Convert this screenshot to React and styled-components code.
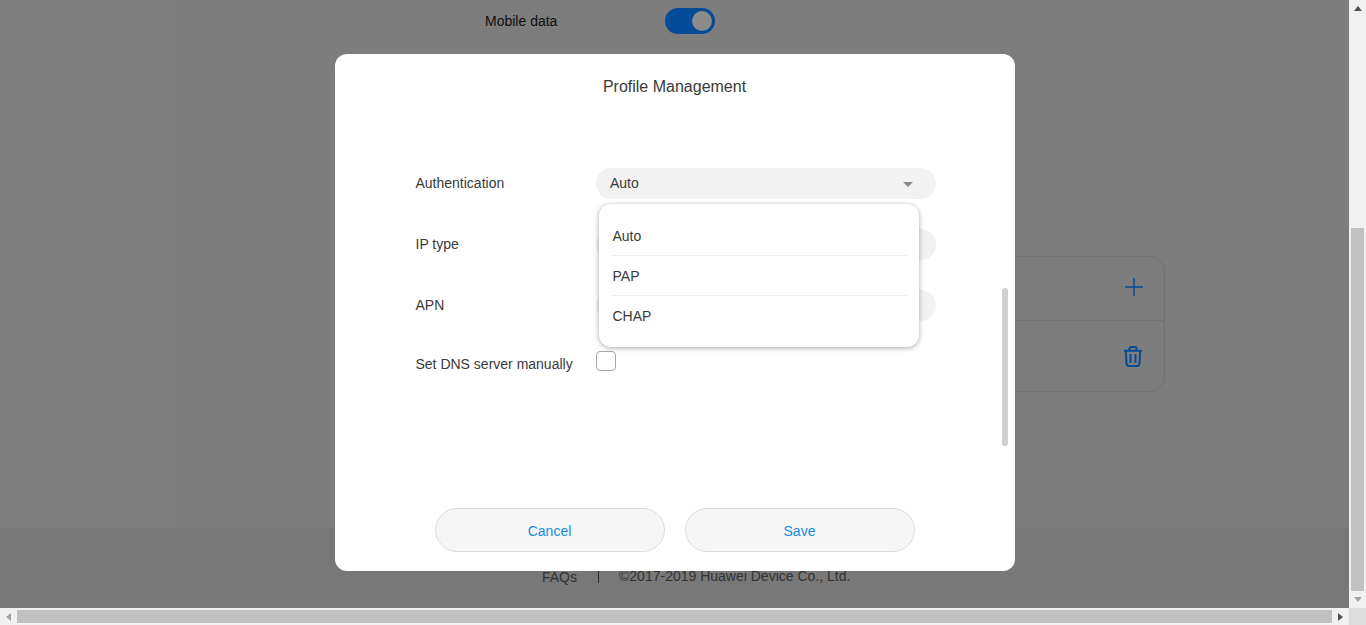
import React from 'react';
import styled, { createGlobalStyle } from 'styled-components';

const options = ['Auto', 'PAP', 'CHAP'];

const App = () => {
  return (
    <Screen>
      <GlobalStyle />
      <PageArea>
        <Main>
          <DataRow>
            <DataLabel>Mobile data</DataLabel>
            <Toggle>
              <Knob />
            </Toggle>
          </DataRow>
          <Card>
            <AddRow>
              <PlusIcon />
            </AddRow>
            <DeleteRow>
              <TrashIcon />
            </DeleteRow>
          </Card>
        </Main>
        <Footer>
          <FaqLink>FAQs</FaqLink>
          <FooterBar />
          <Copyright>©2017-2019 Huawei Device Co., Ltd.</Copyright>
        </Footer>
        <Backdrop>
          <Modal>
            <ModalTitle>Profile Management</ModalTitle>
            <Form>
              <FormRow>
                <FieldLabel>Authentication</FieldLabel>
                <Select>
                  Auto
                  <Caret />
                  <Dropdown>
                    {options.map((option, i) => (
                      <Option key={option} $last={i === options.length - 1}>
                        {option}
                      </Option>
                    ))}
                  </Dropdown>
                </Select>
              </FormRow>
              <FormRow>
                <FieldLabel>IP type</FieldLabel>
                <Select />
              </FormRow>
              <FormRow>
                <FieldLabel>APN</FieldLabel>
                <Select />
              </FormRow>
              <CheckRow>
                <FieldLabel>Set DNS server manually</FieldLabel>
                <Checkbox />
              </CheckRow>
            </Form>
            <ModalScroll />
            <ButtonRow>
              <ActionButton>Cancel</ActionButton>
              <ActionButton>Save</ActionButton>
            </ButtonRow>
          </Modal>
        </Backdrop>
      </PageArea>
      <VerticalBar>
        <ArrowBox>
          <Arrow $dir="up" />
        </ArrowBox>
        <VerticalTrack>
          <VerticalThumb />
        </VerticalTrack>
        <ArrowBox>
          <Arrow $dir="down" />
        </ArrowBox>
      </VerticalBar>
      <HorizontalBar>
        <ArrowBox>
          <Arrow $dir="left" />
        </ArrowBox>
        <HorizontalThumb />
        <ArrowBox>
          <Arrow $dir="right" />
        </ArrowBox>
      </HorizontalBar>
      <Corner />
    </Screen>
  );
};

export default App;

const PlusIcon = () => (
  <IconSvg width="20" height="20" viewBox="0 0 20 20" fill="none" stroke="#054c98" strokeWidth="1.5">
    <path d="M10 1v18M1 10h18" />
  </IconSvg>
);

const TrashIcon = () => (
  <IconSvg width="20" height="21" viewBox="0 0 20 21" fill="none" stroke="#054c98" strokeWidth="2">
    <path d="M1 4.800h18" />
    <path d="M6.500 4.800V2.600C6.500 1.600 7.200 1 8 1h4c.8 0 1.500.6 1.500 1.600v2.200" />
    <path d="M2.800 5l.7 12.500c.1 1.300.9 2.500 2.100 2.500h8.800c1.200 0 2-1.200 2.100-2.500L17.200 5" />
    <path d="M7.500 8v9M12.500 8v9" />
  </IconSvg>
);

const GlobalStyle = createGlobalStyle`
  html,
  body {
    margin: 0;
    height: 100%;
    overflow: hidden;
  }

  body {
    font-family: 'Liberation Sans', Arial, sans-serif;
    font-size: 14px;
    color: #3a3a3a;
  }
`;

const Screen = styled.div`
  display: grid;
  grid-template-columns: 1349px 17px;
  grid-template-rows: 608px 17px;
  width: 1366px;
  height: 625px;
`;

const PageArea = styled.div`
  position: relative;
  display: flex;
  flex-direction: column;
  background: #fff;
  overflow: hidden;
`;

const Main = styled.main`
  height: 528px;
  margin-left: 175px;
  background: #fafafa;
`;

const DataRow = styled.div`
  display: flex;
  align-items: center;
  height: 42px;
  padding-left: 310px;
`;

const DataLabel = styled.span`
  width: 180px;
  color: #222;
`;

/* the blue stays this saturated through the dim layer, so it sits above it */
const Toggle = styled.div`
  position: relative;
  z-index: 1;
  display: flex;
  align-items: center;
  justify-content: flex-end;
  width: 50px;
  height: 26px;
  padding-right: 3px;
  border-radius: 13px;
  background: #054c98;
  box-sizing: border-box;
`;

const Knob = styled.div`
  width: 20px;
  height: 20px;
  border-radius: 50%;
  background: #8c8c8c;
`;

const IconSvg = styled.svg`
  position: relative;
  z-index: 1;
`;

const Card = styled.section`
  width: 680px;
  height: 136px;
  margin: 214px 0 0 310px;
  border: 1px solid #e6e6e6;
  border-radius: 16px;
  box-sizing: border-box;
`;

const AddRow = styled.div`
  display: flex;
  align-items: center;
  justify-content: flex-end;
  height: 60px;
  padding: 0 20px 3px 0;
  border-bottom: 1px solid #e6e6e6;
`;

const DeleteRow = styled.div`
  display: flex;
  align-items: center;
  justify-content: flex-end;
  height: 70px;
  padding-right: 21px;
`;

const Footer = styled.footer`
  display: flex;
  align-items: flex-start;
  flex: 1;
  padding: 40px 0 0 542px;
  background: #f0f0f0;
  color: #666;
`;

const FaqLink = styled.span`
  margin-top: 1px;
`;

const FooterBar = styled.span`
  width: 1px;
  height: 12px;
  margin: 3px 20px 0 21px;
  background: #555;
`;

const Copyright = styled.span``;

const Backdrop = styled.div`
  position: absolute;
  inset: 0;
  display: flex;
  justify-content: center;
  padding-top: 54px;
  background: rgba(0, 0, 0, 0.5);
`;

const Modal = styled.div`
  position: relative;
  display: flex;
  flex-direction: column;
  width: 680px;
  height: 517px;
  border-radius: 12px;
  background: #fff;
`;

const ModalTitle = styled.h2`
  margin: 23px 0 0;
  font-size: 16px;
  font-weight: normal;
  line-height: 20px;
  text-align: center;
  color: #3a3a3a;
`;

const Form = styled.div`
  display: flex;
  flex-direction: column;
  gap: 30px;
  margin-top: 71px;
  padding-left: 80px;
`;

const FormRow = styled.div`
  display: grid;
  grid-template-columns: 181px 340px;
  align-items: center;
  height: 31px;
`;

const CheckRow = styled(FormRow)`
  align-items: start;
  line-height: 26px;
`;

const FieldLabel = styled.label`
  margin: 0 0 2px 1px;
  color: #3a3a3a;
`;

const Select = styled.div`
  position: relative;
  display: flex;
  align-items: center;
  height: 31px;
  padding: 0 0 2px 14.5px;
  border-radius: 16px;
  background: #f2f2f2;
  box-sizing: border-box;
  color: #3a3a3a;
`;

const Caret = styled.span`
  position: absolute;
  top: 14px;
  right: 23px;
  border-top: 5px solid #888;
  border-left: 5px solid transparent;
  border-right: 5px solid transparent;
`;

const Dropdown = styled.ul`
  position: absolute;
  top: 36px;
  left: 3px;
  z-index: 2;
  width: 320px;
  height: 143px;
  margin: 0;
  padding: 12px 11px 0 12px;
  border-radius: 12px;
  background: #fff;
  box-shadow: 0 1px 5px rgba(0, 0, 0, 0.35);
  box-sizing: border-box;
  list-style: none;
`;

const Option = styled.li`
  display: flex;
  align-items: center;
  height: 40px;
  padding-left: 2px;
  border-bottom: 1px solid ${props => (props.$last ? 'transparent' : '#f0f0f0')};
  box-sizing: border-box;
  color: #3a3a3a;
`;

const Checkbox = styled.span`
  display: block;
  width: 20px;
  height: 20px;
  border: 1px solid #a8a8a8;
  border-radius: 4px;
  box-sizing: border-box;
`;

const ModalScroll = styled.div`
  position: absolute;
  top: 234px;
  right: 7px;
  width: 6px;
  height: 158px;
  border-radius: 3px;
  background: #d0d0d0;
`;

const ButtonRow = styled.div`
  display: flex;
  justify-content: center;
  gap: 20px;
  margin-top: auto;
  padding-bottom: 19px;
`;

const ActionButton = styled.button`
  width: 230px;
  height: 44px;
  padding: 1px 0 0;
  border: 1px solid #dcdcdc;
  border-radius: 22px;
  background: #f6f6f6;
  color: #1a8ae6;
  font-family: inherit;
  font-size: 14px;
`;

const VerticalBar = styled.div`
  display: flex;
  flex-direction: column;
  background: #f1f1f1;
`;

const VerticalTrack = styled.div`
  flex: 1;
  padding: 211px 2px 0 2px;
`;

const VerticalThumb = styled.div`
  height: 363px;
  background: #c1c1c1;
`;

const HorizontalBar = styled.div`
  display: flex;
  align-items: center;
  background: #f1f1f1;
`;

const HorizontalThumb = styled.div`
  flex: 1;
  height: 13px;
  background: #c1c1c1;
`;

const ArrowBox = styled.div`
  display: flex;
  align-items: center;
  justify-content: center;
  width: 17px;
  height: 17px;
  flex-shrink: 0;
`;

const arrowBorders = {
  up: 'border-bottom: 5px solid #505050; border-left: 4px solid transparent; border-right: 4px solid transparent;',
  down: 'border-top: 5px solid #a3a3a3; border-left: 4px solid transparent; border-right: 4px solid transparent;',
  left: 'border-right: 5px solid #a3a3a3; border-top: 4px solid transparent; border-bottom: 4px solid transparent;',
  right: 'border-left: 5px solid #505050; border-top: 4px solid transparent; border-bottom: 4px solid transparent;',
};

const Arrow = styled.span`
  width: 0;
  height: 0;
  ${props => arrowBorders[props.$dir]}
`;

const Corner = styled.div`
  background: #dcdcdc;
`;
